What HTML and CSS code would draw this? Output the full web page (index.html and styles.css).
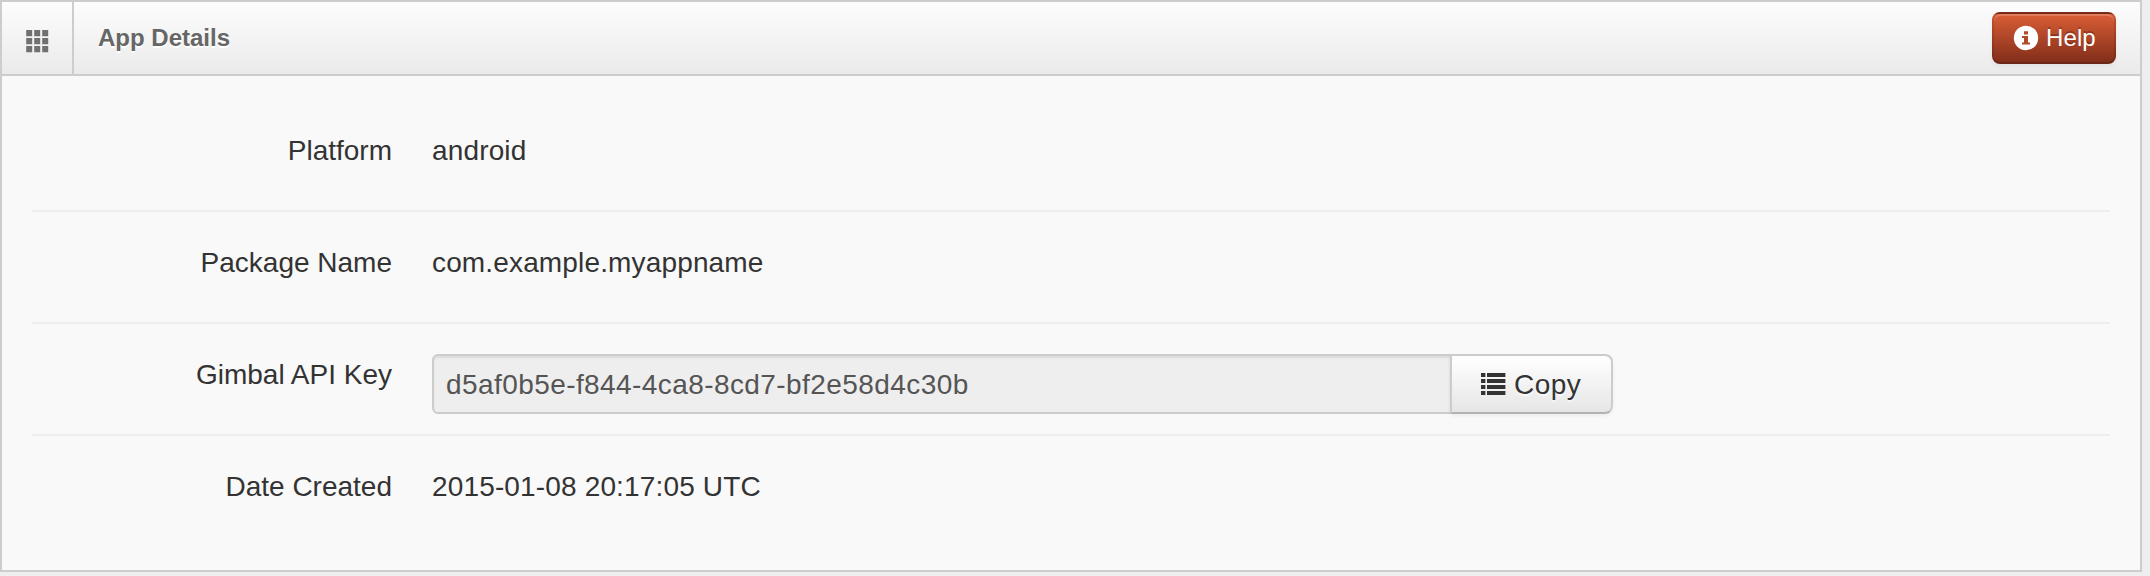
FILE: index.html
```
<!DOCTYPE html>
<html lang="en">
<head>
<meta charset="utf-8">
<title>App Details</title>
<link rel="stylesheet" href="styles.css">
</head>
<body>
<section class="panel">
  <header class="panel-header">
    <span class="panel-icon">
      <svg width="24" height="24" viewBox="0 0 24 24" fill="#707070"><path d="M.2 0h6v6.2h-6zM8.2 0h6v6.2h-6zM16.2 0h6v6.2h-6zM.2 8h6v6.2h-6zM8.2 8h6v6.2h-6zM16.2 8h6v6.2h-6zM.2 16h6v6.2h-6zM8.2 16h6v6.2h-6zM16.2 16h6v6.2h-6z"/></svg>
    </span>
    <h2 class="panel-title">App Details</h2>
    <button class="help" type="button">
      <svg width="26" height="26" viewBox="0 0 26 26"><circle cx="13" cy="13" r="12.2" fill="#fff"/><path fill="#b04a2c" d="M11 6.2h4v3.2h-4zM9 11h6v6.6h2v2H9v-2h2V13H9z"/></svg>
      <span>Help</span>
    </button>
  </header>
  <div class="details">
    <div class="row"><span class="label">Platform</span><span class="value">android</span></div>
    <div class="row"><span class="label">Package Name</span><span class="value">com.example.myappname</span></div>
    <div class="row">
      <span class="label">Gimbal API Key</span>
      <div class="key-group">
        <div class="key">d5af0b5e-f844-4ca8-8cd7-bf2e58d4c30b</div>
        <button class="copy" type="button">
          <svg width="25" height="24" viewBox="0 0 25 24" fill="#333"><path d="M0 0h4.4v4H0zM6 0h18.4v4H6zM0 6h4.4v4H0zM6 6h18.4v4H6zM0 12h4.4v4H0zM6 12h18.4v4H6zM0 18h4.4v4H0zM6 18h18.4v4H6z"/></svg>
          <span>Copy</span>
        </button>
      </div>
    </div>
    <div class="row"><span class="label">Date Created</span><span class="value">2015-01-08 20:17:05 UTC</span></div>
  </div>
</section>
</body>
</html>
```
FILE: styles.css
```
* { box-sizing: border-box; }

body {
  margin: 0;
  height: 576px;
  background: #eee;
  color: #333;
  font: 28px/40px "Liberation Sans", Arial, sans-serif;
}

svg { display: block; flex: none; }

.panel {
  width: 2142px;
  height: 572px;
  border: 2px solid #cdcdcd;
  background: #f9f9f9;
}

.panel-header {
  display: flex;
  align-items: center;
  height: 74px;
  padding-right: 24px;
  border-bottom: 2px solid #cdcdcd;
  background: linear-gradient(#fdfdfd, #eaeaea);
}

.panel-icon {
  width: 72px;
  height: 72px;
  padding: 28px 0 0 24px;
  border-right: 2px solid #cdcdcd;
}

.panel-title {
  flex: 1;
  margin: 0;
  padding-left: 24px;
  color: #666;
  font-size: 24px;
  line-height: 36px;
  text-shadow: 0 2px 0 #fff;
}

button { font-family: inherit; }

/* The gradient repeats under the translucent border, which darkens the top edge. */
.help {
  display: flex;
  align-items: center;
  gap: 7px;
  width: 124px;
  height: 52px;
  padding: 0 19px;
  border: 2px solid;
  border-color: rgba(0, 0, 0, .1) rgba(0, 0, 0, .1) rgba(0, 0, 0, .25);
  border-bottom-color: #6b2615;
  border-radius: 8px;
  background: linear-gradient(#da5d35, #822e1a);
  color: #fff;
  font-size: 24px;
  line-height: 36px;
  letter-spacing: .1px;
  text-shadow: 0 -2px 0 rgba(0, 0, 0, .25);
  box-shadow: inset 0 2px 0 rgba(255, 255, 255, .2), 0 2px 4px rgba(0, 0, 0, .05);
}

.details { padding: 24px 30px; }

.row {
  display: flex;
  gap: 40px;
  height: 112px;
  padding-top: 30px;
  border-bottom: 2px solid #eee;
}

.row:last-child { border-bottom: 0; }

.label { width: 360px; line-height: 42px; text-align: right; }

.value { line-height: 42px; letter-spacing: .15px; }

.key-group { display: flex; height: 60px; }

.key {
  width: 1020px;
  padding: 9px 12px 7px;
  border: 2px solid #ccc;
  border-radius: 6px 0 0 6px;
  background: #eee;
  color: #555;
  letter-spacing: .42px;
  box-shadow: inset 0 2px 2px rgba(0, 0, 0, .075);
}

.copy {
  display: flex;
  align-items: center;
  gap: 8px;
  width: 163px;
  margin-left: -2px;
  padding: 0 26px 0 29px;
  border: 2px solid;
  border-color: #ccc #ccc #b3b3b3;
  border-radius: 0 8px 8px 0;
  background: linear-gradient(#fff, #e6e6e6);
  color: #333;
  font-size: 28px;
  line-height: 42px;
  letter-spacing: .5px;
  text-shadow: 0 2px 2px rgba(255, 255, 255, .75);
  box-shadow: inset 0 2px 0 rgba(255, 255, 255, .2), 0 2px 4px rgba(0, 0, 0, .05);
}

.copy svg { margin-top: 2px; }
.copy span { padding-top: 1px; }
```
